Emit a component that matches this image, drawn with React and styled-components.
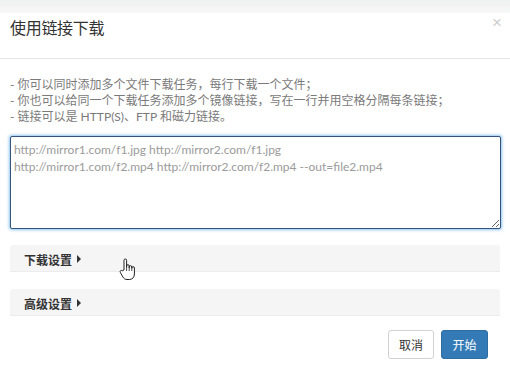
import React from "react";
import styled, { createGlobalStyle } from "styled-components";

const GlobalStyle = createGlobalStyle`
  html, body {
    margin: 0;
    padding: 0;
    background: #fff;
  }
  body {
    font-family: "Lato", "Noto Sans CJK SC", sans-serif;
    color: #333;
  }
`;

const Page = styled.div`
  position: relative;
  width: 510px;
  height: 382px;
  overflow: hidden;
  background: #fff;
`;

const TopStrip = styled.div`
  height: 13px;
  background: linear-gradient(#eff0f0, #f8f8f8);
`;

const Header = styled.div`
  position: relative;
  padding: 2px 10px 17px;
  border-bottom: 1px solid #e5e5e5;
`;

const Title = styled.h4`
  margin: 0;
  font-size: 16px;
  line-height: 26px;
  font-weight: normal;
  color: #333;
  letter-spacing: -0.3px;
`;

const Close = styled.button`
  position: absolute;
  right: 8px;
  top: 1px;
  border: 0;
  padding: 0;
  background: transparent;
  font-family: "Liberation Sans", sans-serif;
  font-size: 17px;
  line-height: 17px;
  color: #000;
  opacity: 0.2;
  cursor: pointer;
`;

const Body = styled.div`
  padding: 18px 10px 0;
`;

const Tips = styled.div`
  font-size: 12px;
  line-height: 16px;
  color: #7a7a7a;
  margin-bottom: 11px;
`;

const Input = styled.textarea`
  display: block;
  box-sizing: border-box;
  width: 491px;
  height: 93px;
  margin: 0;
  padding: 4px 3px;
  border: 1px solid #34547a;
  border-radius: 2px;
  box-shadow: 0 0 3px 1px rgba(102, 175, 233, 0.75);
  font-family: "Lato", "Noto Sans CJK SC", sans-serif;
  font-size: 12px;
  line-height: 17px;
  color: #555;
  outline: none;
  resize: both;

  &::placeholder {
    color: #9b9b9b;
  }
`;

const Section = styled.div`
  box-sizing: border-box;
  width: 490px;
  height: 27px;
  margin-top: ${(p) => p.$gap}px;
  padding: 2px 14px 0;
  display: flex;
  align-items: center;
  gap: 5px;
  background: #f5f5f6;
  border-bottom: 1px solid #ececec;
  border-radius: 3px 3px 0 0;
  font-size: 12px;
  font-weight: bold;
  color: #333;
`;

const Caret = styled.span`
  width: 0;
  height: 0;
  border-top: 4px solid transparent;
  border-bottom: 4px solid transparent;
  border-left: 4px solid #333;
`;

const Footer = styled.div`
  display: flex;
  justify-content: flex-end;
  gap: 7px;
  padding: 14px 22px 0 10px;
`;

const Button = styled.button`
  box-sizing: border-box;
  height: 29px;
  width: ${(p) => (p.$primary ? 47 : 46)}px;
  padding: 0;
  border-radius: 3px;
  border: 1px solid ${(p) => (p.$primary ? "#2e6da4" : "#d2d2d2")};
  background: ${(p) => (p.$primary ? "#337ab7" : "#fff")};
  color: ${(p) => (p.$primary ? "#fff" : "#333")};
  font-family: "Lato", "Noto Sans CJK SC", sans-serif;
  font-size: 12px;
  cursor: pointer;
`;

const Pointer = styled.svg`
  position: absolute;
  left: 119px;
  top: 258px;
`;

function HandCursor() {
  return (
    <Pointer width="18" height="23" viewBox="0 0 18 23">
      <path
        d="M5 12 V2.3 a1.3 1.3 0 0 1 2.6 0 V9.5 V8 a1.3 1.3 0 0 1 2.6 0 V10 V9 a1.3 1.3 0 0 1 2.6 0 V10.5 V10 a1.3 1.3 0 0 1 2.6 0 V16 c0 3.2 -2 5.5 -5 5.5 h-2.4 c-2 0 -3.2 -1 -4.2 -2.6 L1.3 14.3 c-0.9 -1.3 0.9 -2.6 2 -1.5 Z"
        fill="#fff"
        stroke="#222"
        strokeWidth="1"
        strokeLinejoin="round"
      />
      <path d="M7.6 9.5 V13 M10.2 10 V13 M12.8 10.5 V13" stroke="#222" strokeWidth="0.8" />
    </Pointer>
  );
}

export default function App() {
  return (
    <Page>
      <GlobalStyle />
      <TopStrip />
      <Header>
        <Title>使用链接下载</Title>
        <Close>×</Close>
      </Header>
      <Body>
        <Tips>
          <div>- 你可以同时添加多个文件下载任务，每行下载一个文件；</div>
          <div>- 你也可以给同一个下载任务添加多个镜像链接，写在一行并用空格分隔每条链接；</div>
          <div>- 链接可以是 HTTP(S)、FTP 和磁力链接。</div>
        </Tips>
        <Input
          placeholder={
            "http://mirror1.com/f1.jpg http://mirror2.com/f1.jpg\nhttp://mirror1.com/f2.mp4 http://mirror2.com/f2.mp4 --out=file2.mp4"
          }
        />
        <Section $gap={16}>
          下载设置 <Caret />
        </Section>
        <Section $gap={17}>
          高级设置 <Caret />
        </Section>
      </Body>
      <Footer>
        <Button>取消</Button>
        <Button $primary>开始</Button>
      </Footer>
      <HandCursor />
    </Page>
  );
}
